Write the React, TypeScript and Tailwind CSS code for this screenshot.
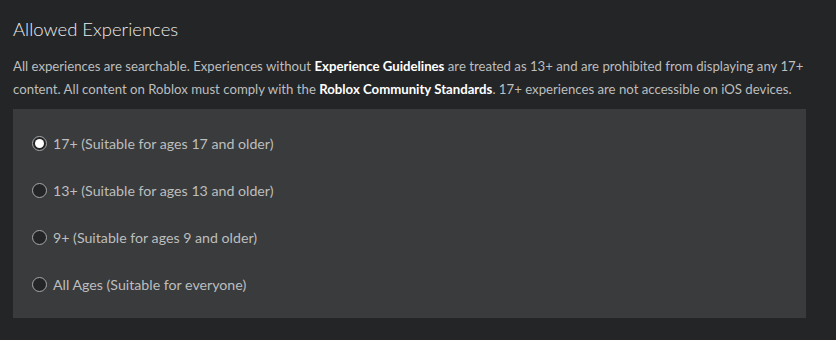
const OPTIONS = [
  { id: '17', label: '17+ (Suitable for ages 17 and older)' },
  { id: '13', label: '13+ (Suitable for ages 13 and older)' },
  { id: '9', label: '9+ (Suitable for ages 9 and older)' },
  { id: 'all', label: 'All Ages (Suitable for everyone)' },
];

function Radio({ checked }: { checked: boolean }) {
  return (
    <span className="w-[15px] h-[15px] rounded-full border border-[#a6a8aa] bg-[#232527] flex items-center justify-center shrink-0">
      {checked && <span className="w-[9px] h-[9px] rounded-full bg-white" />}
    </span>
  );
}

export default function App() {
  const selected = '17';
  return (
    <div className="w-[836px] h-[340px] bg-[#232527] px-[13px] pt-[16px] font-['Lato',sans-serif]">
      <h2 className="text-[18.5px] leading-[26px] font-light text-[#ececec]">Allowed Experiences</h2>
      <p className="mt-[13px] text-[13.2px] leading-[23px] text-[#bdbebe]">
        All experiences are searchable. Experiences without{' '}
        <span className="font-bold text-white">Experience Guidelines</span> are treated as 13+ and are prohibited from
        displaying any 17+ content. All content on Roblox must comply with the{' '}
        <span className="font-bold text-white">Roblox Community Standards</span>. 17+ experiences are not accessible
        on iOS devices.
      </p>
      <div className="mt-[8px] w-[793px] h-[209px] bg-[#393b3d] px-[19px] pt-[24px] flex flex-col gap-[26px]">
        {OPTIONS.map((o) => (
          <label key={o.id} className="flex items-center gap-[6px] h-[21px] text-[14.2px] text-[#bdbebe]">
            <Radio checked={o.id === selected} />
            {o.label}
          </label>
        ))}
      </div>
    </div>
  );
}
